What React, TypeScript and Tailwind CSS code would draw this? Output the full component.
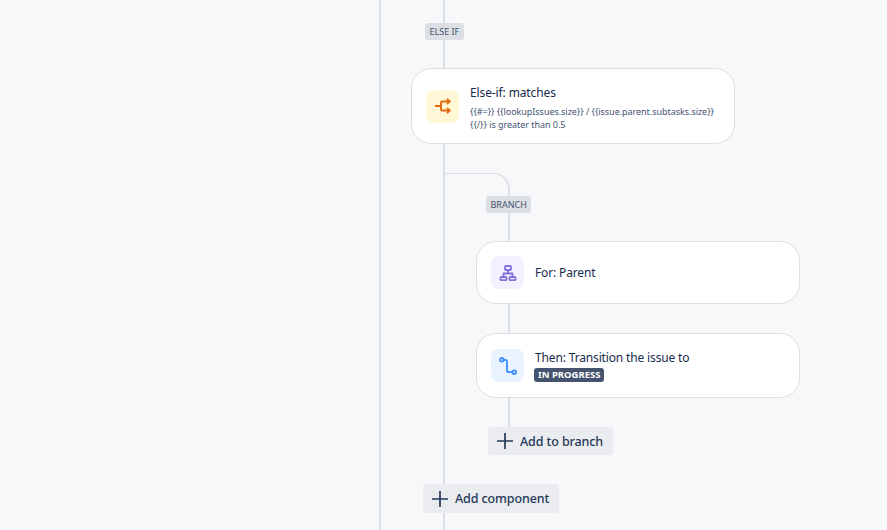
const font = { fontFamily: '"Noto Sans", sans-serif' }

function Badge({ label }: { label: string }) {
  return (
    <span className="block rounded-[3px] bg-[#dcdfe4] px-[4.5px] text-[9px] leading-[17px] text-[#44546f] whitespace-nowrap">
      {label}
    </span>
  )
}

function Line({ height }: { height: string }) {
  return <div className={`w-[2px] shrink-0 bg-[#dcdfe4] ${height}`} />
}

function PlusIcon() {
  return (
    <svg width="16" height="16" viewBox="0 0 16 16" className="shrink-0">
      <path d="M8 0v16M0 8h16" stroke="#253858" strokeWidth="1.7" />
    </svg>
  )
}

function AddButton({ label, height }: { label: string; height: string }) {
  return (
    <button className={`flex items-center gap-[7px] rounded-[3px] bg-[#ebecf0] pl-[9px] pr-[10px] text-[12.5px] font-medium tracking-[-0.1px] text-[#253858] ${height}`}>
      <PlusIcon />
      <span className="pt-[2px]">{label}</span>
    </button>
  )
}

function IconBox({ bg, children }: { bg: string; children: React.ReactNode }) {
  return (
    <div className={`flex h-[33px] w-[33px] shrink-0 items-center justify-center rounded-[8px] ${bg}`}>
      {children}
    </div>
  )
}

function Card({ height, icon, children }: { height: string; icon: React.ReactNode; children: React.ReactNode }) {
  return (
    <div className={`flex w-[324px] shrink-0 items-center gap-[11px] rounded-[20px] border border-[#dcdfe4] bg-white pl-[14px] pr-[14px] ${height}`}>
      {icon}
      <div className="min-w-0 flex-1">{children}</div>
    </div>
  )
}

export default function App() {
  return (
    <div className="flex h-[530px] w-[887px] overflow-hidden bg-[#f7f8f9] text-[#172b4d]" style={font}>
      <div className="w-[379px] shrink-0" />
      <div className="h-full w-[2px] shrink-0 bg-[#dcdfe4]" />
      <div className="ml-[30px] flex flex-col">
        <div className="relative ml-[32px] shrink-0">
          <Line height="h-[68px]" />
          <div className="absolute left-[-18px] top-[23px]">
            <Badge label="ELSE IF" />
          </div>
        </div>
        <Card
          height="h-[76px]"
          icon={
            <IconBox bg="bg-[#fff7d6]">
              <svg width="18" height="18" viewBox="0 0 18 18" fill="none" stroke="#e56910" strokeWidth="1.9">
                <path d="M1 9h6M7 9V5.5q0-1 1-1h7M7 9v3.5q0 1 1 1h7" />
                <path d="M13 2l2.7 2.5L13 7M13 11l2.7 2.5L13 16" />
              </svg>
            </IconBox>
          }
        >
          <div className="pt-[3px] text-[12px] leading-[18px] tracking-[-0.12px]">Else-if: matches</div>
          <div className="mt-[3px] text-[9px] leading-[13px] tracking-[-0.04px] text-[#44546f]">
            {'{{#=}} {{lookupIssues.size}} / {{issue.parent.subtasks.size}}'}
            <br />
            {'{{/}} is greater than 0.5'}
          </div>
        </Card>
        <div className="ml-[32px] h-[340px] shrink-0 border-l-2 border-[#dcdfe4] pt-[29px]">
          <div className="relative h-[68px] w-[65px] rounded-tr-[16px] border-r-2 border-t border-[#dcdfe4]">
            <div className="absolute left-[41px] top-[22px]">
              <Badge label="BRANCH" />
            </div>
          </div>
          <div className="ml-[31px] flex flex-col">
            <Card
              height="h-[63px]"
              icon={
                <IconBox bg="bg-[#f3f0ff]">
                  <svg width="18" height="18" viewBox="0 0 18 18" fill="none" stroke="#8270db" strokeWidth="1.8">
                    <rect x="6" y="2" width="6" height="4" rx="1" />
                    <rect x="1.5" y="13" width="6" height="3.2" rx="1" />
                    <rect x="10.5" y="13" width="6" height="3.2" rx="1" />
                    <path d="M9 6v3.5M4.5 13V9.5h9V13" />
                  </svg>
                </IconBox>
              }
            >
              <div className="text-[12px] leading-[18px] tracking-[-0.15px]">For: Parent</div>
            </Card>
            <div className="ml-[32px]"><Line height="h-[29px]" /></div>
            <Card
              height="h-[65px]"
              icon={
                <IconBox bg="bg-[#e9f2ff]">
                  <svg width="18" height="18" viewBox="0 0 18 18" fill="none" stroke="#388bff" strokeWidth="1.8">
                    <circle cx="2.8" cy="2.8" r="1.8" />
                    <circle cx="15.2" cy="15.2" r="1.8" />
                    <path d="M4.6 2.8h1.4q2 0 2 2v8.4q0 2 2 2h3.4" />
                  </svg>
                </IconBox>
              }
            >
              <div className="text-[12px] leading-[18px] tracking-[-0.15px]">Then: Transition the issue to</div>
              <div className="flex">
                <span className="-ml-[1px] mt-[1px] rounded-[3px] bg-[#44546f] px-[4px] text-[9.5px] font-bold leading-[14px] text-white">
                  IN PROGRESS
                </span>
              </div>
            </Card>
            <div className="ml-[32px]"><Line height="h-[29px]" /></div>
            <div className="ml-[12px] flex">
              <AddButton label="Add to branch" height="h-[28px]" />
            </div>
          </div>
        </div>
        <div className="relative ml-[12px] flex shrink-0">
          <AddButton label="Add component" height="h-[29px]" />
        </div>
        <div className="ml-[32px]"><Line height="h-[20px]" /></div>
      </div>
    </div>
  )
}
